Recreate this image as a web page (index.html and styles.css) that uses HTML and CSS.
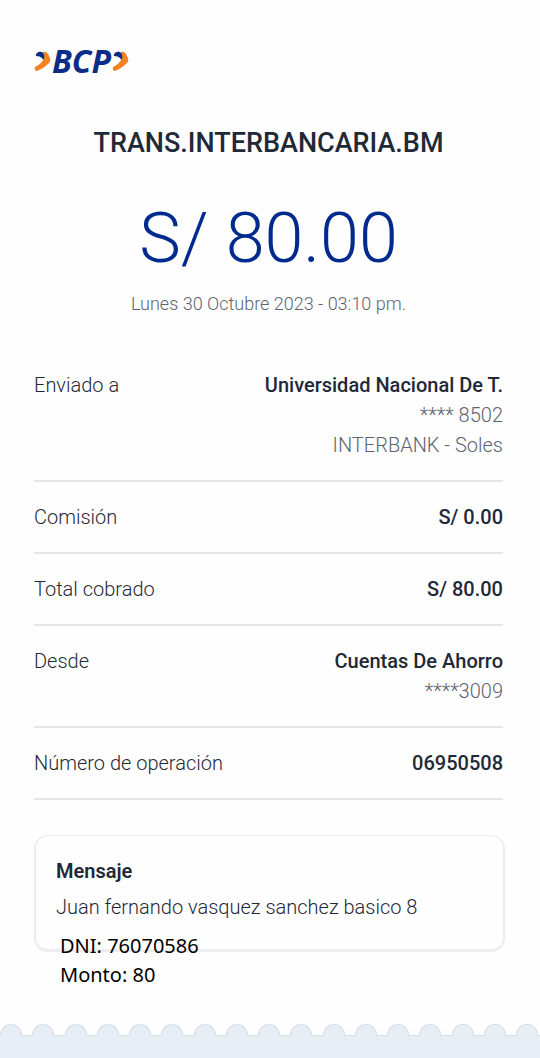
FILE: index.html
```html
<!DOCTYPE html>
<html lang="es">
<head>
<meta charset="utf-8">
<meta name="viewport" content="width=device-width, initial-scale=1">
<title>Constancia de transferencia</title>
<link rel="stylesheet" href="styles.css">
</head>
<body>
<main class="receipt">
  <div class="logo">
    <svg class="chevron" viewBox="0 0 17 22" aria-hidden="true"><path class="orange" d="M9 2Q13 1 15 6Q18 11 14 14Q9 19 3 21Q0 21 1 17Q7 14 9 10Z"/><path class="blue" d="M3 3Q5 1 8 2Q11 4 10 9Q9 10 8 8Q6 6 2 6Q1 5 3 3Z"/></svg>
    <span class="logo-text">BCP</span>
    <svg class="chevron" viewBox="0 0 17 22" aria-hidden="true"><path class="orange" d="M9 2Q13 1 15 6Q18 11 14 14Q9 19 3 21Q0 21 1 17Q7 14 9 10Z"/><path class="blue" d="M3 3Q5 1 8 2Q11 4 10 9Q9 10 8 8Q6 6 2 6Q1 5 3 3Z"/></svg>
  </div>
  <h1 class="title">TRANS.INTERBANCARIA.BM</h1>
  <p class="amount">S/ 80.00</p>
  <p class="date">Lunes 30 Octubre 2023 - 03:10 pm.</p>
  <dl class="details">
    <div class="row"><dt>Enviado a</dt><dd><strong>Universidad Nacional De T.</strong><span>**** 8502</span><span>INTERBANK - Soles</span></dd></div>
    <div class="row"><dt>Comisión</dt><dd><strong>S/ 0.00</strong></dd></div>
    <div class="row"><dt>Total cobrado</dt><dd><strong>S/ 80.00</strong></dd></div>
    <div class="row"><dt>Desde</dt><dd><strong>Cuentas De Ahorro</strong><span>****3009</span></dd></div>
    <div class="row"><dt>Número de operación</dt><dd><strong>06950508</strong></dd></div>
  </dl>
  <section class="message">
    <h2 class="message-title">Mensaje</h2>
    <p class="message-text">Juan fernando vasquez sanchez basico 8</p>
    <p class="note">DNI: 76070586<br>Monto: 80</p>
  </section>
</main>
<footer class="edge">
  <div class="scallops"><i></i><i></i><i></i><i></i><i></i><i></i><i></i><i></i><i></i><i></i><i></i><i></i><i></i><i></i><i></i><i></i><i></i></div>
  <div class="base"></div>
</footer>
</body>
</html>
```
FILE: styles.css
```css
* { box-sizing: border-box; }
body {
  margin: 0;
  min-height: 100vh;
  display: flex;
  flex-direction: column;
  background: #fefefe;
  color: #1f2937;
  font-family: Roboto, "Noto Sans", sans-serif;
  font-size: 20px;
  line-height: 30px;
}
h1, h2, p, dl, dd { margin: 0; }
.receipt { padding: 40px 37px 0 34px; }
.logo { display: flex; align-items: center; gap: 1px; height: 42px; }
.chevron { width: 17px; height: 22px; }
.orange { fill: #f58220; }
.blue { fill: #0a2d87; }
.logo-text {
  font: italic 700 32px/42px "Open Sans", sans-serif;
  color: #0a2d87;
}
.title {
  margin-top: 41px;
  font-size: 27px;
  font-weight: 500;
  line-height: 40px;
  text-align: center;
}
.amount {
  margin-top: 36px;
  font-size: 70px;
  font-weight: 300;
  line-height: 78px;
  text-align: center;
  color: #002a8d;
}
.date {
  margin-top: 11px;
  font-size: 18px;
  font-weight: 300;
  line-height: 32px;
  text-align: center;
  color: #5b6470;
}
.details { margin-top: 30px; }
.row {
  display: flex;
  justify-content: space-between;
  gap: 16px;
  padding: 20px 0;
  border-bottom: 2px solid #e6e6e6;
}
dt { font-weight: 300; }
dd { display: flex; flex-direction: column; text-align: right; }
dd strong { font-weight: 500; }
dd span { font-weight: 300; color: #5b6470; }
.message {
  position: relative;
  margin: 35px -2px 0 0;
  padding: 20px 20px 27px;
  border: 1px solid #ededed;
  border-width: 1px 2px 3px;
  border-radius: 14px;
}
.message-title { font-size: 20px; font-weight: 600; }
.message-text { margin-top: 6px; font-weight: 300; }
.note {
  position: absolute;
  left: 24px;
  top: 95px;
  font-family: "Noto Sans", sans-serif;
  line-height: 29px;
  color: #000;
}
.edge { margin-top: auto; padding-top: 72px; }
.scallops { display: flex; justify-content: space-between; padding-right: 2px; }
.scallops i {
  width: 22px;
  height: 12px;
  margin-bottom: -1px;
  border: 1px solid #d7dee8;
  border-bottom: 0;
  border-radius: 11px 11px 0 0;
  background: #e8eef5;
  z-index: 1;
}
.base { height: 23px; border-top: 1px solid #d7dee8; background: #e8eef5; }
```
